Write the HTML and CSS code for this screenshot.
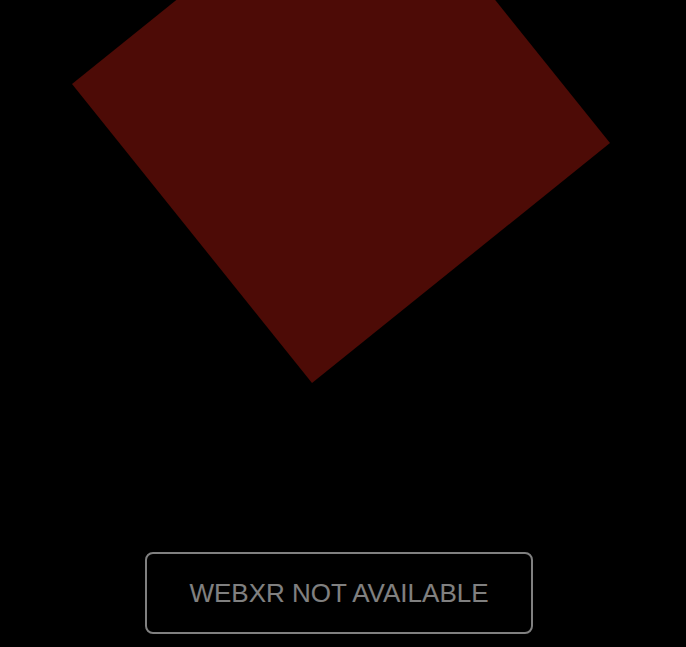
FILE: index.html
```html
<!DOCTYPE html>
<html lang="en">
<head>
<meta charset="utf-8">
<title>WebXR</title>
<link rel="stylesheet" href="styles.css">
</head>
<body>
<div class="stage">
  <svg class="scene" width="686" height="647" viewBox="0 0 686 647" aria-hidden="true">
    <polygon points="72,84 370,-156 610,143 312,383" fill="#4d0b06"/>
  </svg>
  <button class="xr-button" type="button">WEBXR NOT AVAILABLE</button>
</div>
</body>
</html>
```
FILE: styles.css
```css
html, body {
  margin: 0;
  padding: 0;
  background: #000;
  overflow: hidden;
}
.stage {
  position: relative;
  width: 686px;
  height: 647px;
  background: #000;
}
.scene {
  display: block;
}
.xr-button {
  position: absolute;
  left: 145px;
  top: 552px;
  width: 388px;
  height: 82px;
  box-sizing: border-box;
  padding: 0 6px;
  border: 2px solid #fff;
  border-radius: 8px;
  background: rgba(0, 0, 0, 0.1);
  color: #fff;
  opacity: 0.5;
  font-family: "Liberation Sans", Arial, sans-serif;
  font-size: 26px;
  font-weight: normal;
  line-height: 30px;
  text-align: center;
  outline: none;
}
```
